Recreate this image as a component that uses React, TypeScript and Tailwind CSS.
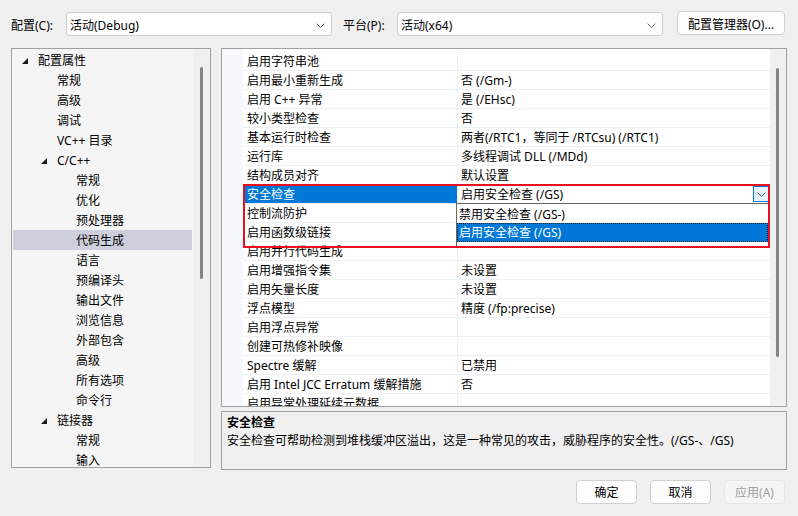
import React from "react";

const TREE: { label: string; level: number; open?: boolean; sel?: boolean }[] = [
  { label: "配置属性", level: 0, open: true },
  { label: "常规", level: 1 },
  { label: "高级", level: 1 },
  { label: "调试", level: 1 },
  { label: "VC++ 目录", level: 1 },
  { label: "C/C++", level: 1, open: true },
  { label: "常规", level: 2 },
  { label: "优化", level: 2 },
  { label: "预处理器", level: 2 },
  { label: "代码生成", level: 2, sel: true },
  { label: "语言", level: 2 },
  { label: "预编译头", level: 2 },
  { label: "输出文件", level: 2 },
  { label: "浏览信息", level: 2 },
  { label: "外部包含", level: 2 },
  { label: "高级", level: 2 },
  { label: "所有选项", level: 2 },
  { label: "命令行", level: 2 },
  { label: "链接器", level: 1, open: true },
  { label: "常规", level: 2 },
  { label: "输入", level: 2 },
];

const INDENT = ["pl-[9px]", "pl-[28px]", "pl-[47px]"];

const ROWS: [string, string][] = [
  ["启用字符串池", ""],
  ["启用最小重新生成", "否 (/Gm-)"],
  ["启用 C++ 异常", "是 (/EHsc)"],
  ["较小类型检查", "否"],
  ["基本运行时检查", "两者(/RTC1，等同于 /RTCsu) (/RTC1)"],
  ["运行库", "多线程调试 DLL (/MDd)"],
  ["结构成员对齐", "默认设置"],
  ["安全检查", "启用安全检查 (/GS)"],
  ["控制流防护", ""],
  ["启用函数级链接", ""],
  ["启用并行代码生成", ""],
  ["启用增强指令集", "未设置"],
  ["启用矢量长度", "未设置"],
  ["浮点模型", "精度 (/fp:precise)"],
  ["启用浮点异常", ""],
  ["创建可热修补映像", ""],
  ["Spectre 缓解", "已禁用"],
  ["启用 Intel JCC Erratum 缓解措施", "否"],
  ["启用异常处理延续元数据", ""],
];

function Chevron() {
  return (
    <svg width="9" height="5" viewBox="0 0 9 5" className="shrink-0">
      <path d="M0.5 0.5 L4.5 4.5 L8.5 0.5" fill="none" stroke="#606060" strokeWidth="1" />
    </svg>
  );
}

function Triangle() {
  return (
    <svg width="6" height="6" viewBox="0 0 6 6">
      <polygon points="6,0 6,6 0,6" fill="#1a1a1a" />
    </svg>
  );
}

function Combo({ text }: { text: string }) {
  return (
    <div className="flex h-[24px] w-[266px] items-center justify-between rounded-[3px] border border-[#d0d0d0] bg-white pl-[3px] pr-[6px] pt-[3px]">
      <span>{text}</span>
      <Chevron />
    </div>
  );
}

function Button({ label, disabled }: { label: string; disabled?: boolean }) {
  return (
    <div
      className={
        disabled
          ? "flex h-[24px] w-[61px] items-center justify-center rounded-[4px] border border-[#e6e6e6] bg-[#f5f5f5] pt-[1px] text-[#a0a0a0]"
          : "flex h-[24px] w-[61px] items-center justify-center rounded-[4px] border border-[#d0d0d0] bg-[#fdfdfd] pt-[1px]"
      }
    >
      {label}
    </div>
  );
}

export default function App() {
  return (
    <div className="h-[516px] w-[798px] overflow-hidden bg-[#f0f0f0] font-['Noto_Sans','Noto_Sans_CJK_SC',sans-serif] text-[12px] text-black">
      {/* top bar */}
      <div className="mt-[12px] flex h-[24px] items-center pl-[11px]">
        <span className="w-[55px] pt-[4px]">配置(C):</span>
        <Combo text="活动(Debug)" />
        <span className="ml-[11px] w-[54px] pt-[4px]">平台(P):</span>
        <Combo text="活动(x64)" />
        <div className="mb-[2px] ml-[14px] flex h-[24px] w-[108px] items-center justify-center rounded-[4px] border border-[#d0d0d0] bg-[#fdfdfd] pt-[4px]">
          配置管理器(O)...
        </div>
      </div>

      <div className="ml-[11px] mt-[12px] flex items-start gap-[10px]">
        {/* tree */}
        <div className="flex h-[420px] w-[200px] overflow-hidden border border-[#a0a0a0] bg-[#f5f5f5]">
          <div className="flex w-[181px] flex-col px-[1px] pt-[1px]">
            {TREE.map((n, i) => (
              <div
                key={i}
                className={`flex h-[20px] shrink-0 items-center pt-[2px] ${INDENT[n.level]} ${n.sel ? "bg-[#cdcfdc]" : ""}`}
              >
                <span className="flex w-[16px] shrink-0 items-center">{n.open ? <Triangle /> : null}</span>
                <span className="whitespace-nowrap">{n.label}</span>
              </div>
            ))}
          </div>
          <div className="flex-1 bg-[#f0f0f0] pl-[7px] pt-[18px]">
            <div className="h-[212px] w-[3px] rounded-full bg-[#858585]" />
          </div>
        </div>

        <div className="flex w-[566px] flex-col gap-[4px]">
          {/* property grid */}
          <div className="relative flex h-[359px] overflow-hidden border border-[#a0a0a0] bg-white">
            <div className="w-[21px] shrink-0 bg-[#f5f8fc]" />
            <div className="flex w-[527px] flex-col pt-[3px]">
              {ROWS.map(([name, value], i) => {
                const sel = i === 7;
                return (
                  <div key={i} className="flex h-[19px] shrink-0 border-b border-[#edf0f5]">
                    <div
                      className={`w-[214px] shrink-0 whitespace-nowrap pl-[4px] pt-[1px] leading-[18px] ${sel ? "bg-[#0078d7] text-white" : ""}`}
                    >
                      {name}
                    </div>
                    <div className="flex flex-1 items-start justify-between border-l border-[#edf0f5] pl-[3px]">
                      <span className="whitespace-nowrap pt-[1px] leading-[18px]">{value}</span>
                      {sel ? (
                        <div className="mr-[1px] mt-[1px] flex h-[16px] w-[16px] items-center justify-center border border-[#0078d7] bg-[#e5f1fb]">
                          <Chevron />
                        </div>
                      ) : null}
                    </div>
                  </div>
                );
              })}
            </div>
            <div className="w-[16px] shrink-0 bg-[#f0f0f0] pl-[6px] pt-[19px]">
              <div className="h-[289px] w-[3px] rounded-full bg-[#858585]" />
            </div>

            {/* open dropdown list */}
            <div className="absolute left-[234px] top-[154px] flex h-[44px] w-[313px] flex-col border border-[#646464] bg-white">
              <div className="h-[19px] shrink-0 pl-[2px] pt-[2px] leading-[18px]">禁用安全检查 (/GS-)</div>
              <div className="h-[19px] shrink-0 border border-dotted border-[#202020] bg-[#0078d7] pl-[1px] leading-[18px] text-white">
                启用安全检查 (/GS)
              </div>
            </div>

            {/* highlight box */}
            <div className="pointer-events-none absolute left-[21px] top-[135px] h-[64px] w-[527px] border-2 border-[#e8101e]" />
          </div>

          {/* description */}
          <div className="h-[59px] border border-[#a0a0a0] px-[5px] pt-[2px]">
            <div className="font-bold leading-[18px]">安全检查</div>
            <div className="leading-[18px]">
              安全检查可帮助检测到堆栈缓冲区溢出，这是一种常见的攻击，威胁程序的安全性。(/GS-、/GS)
            </div>
          </div>
        </div>
      </div>

      <div className="mt-[10px] flex justify-end gap-[13px] pr-[13px]">
        <Button label="确定" />
        <Button label="取消" />
        <Button label="应用(A)" disabled />
      </div>
    </div>
  );
}
